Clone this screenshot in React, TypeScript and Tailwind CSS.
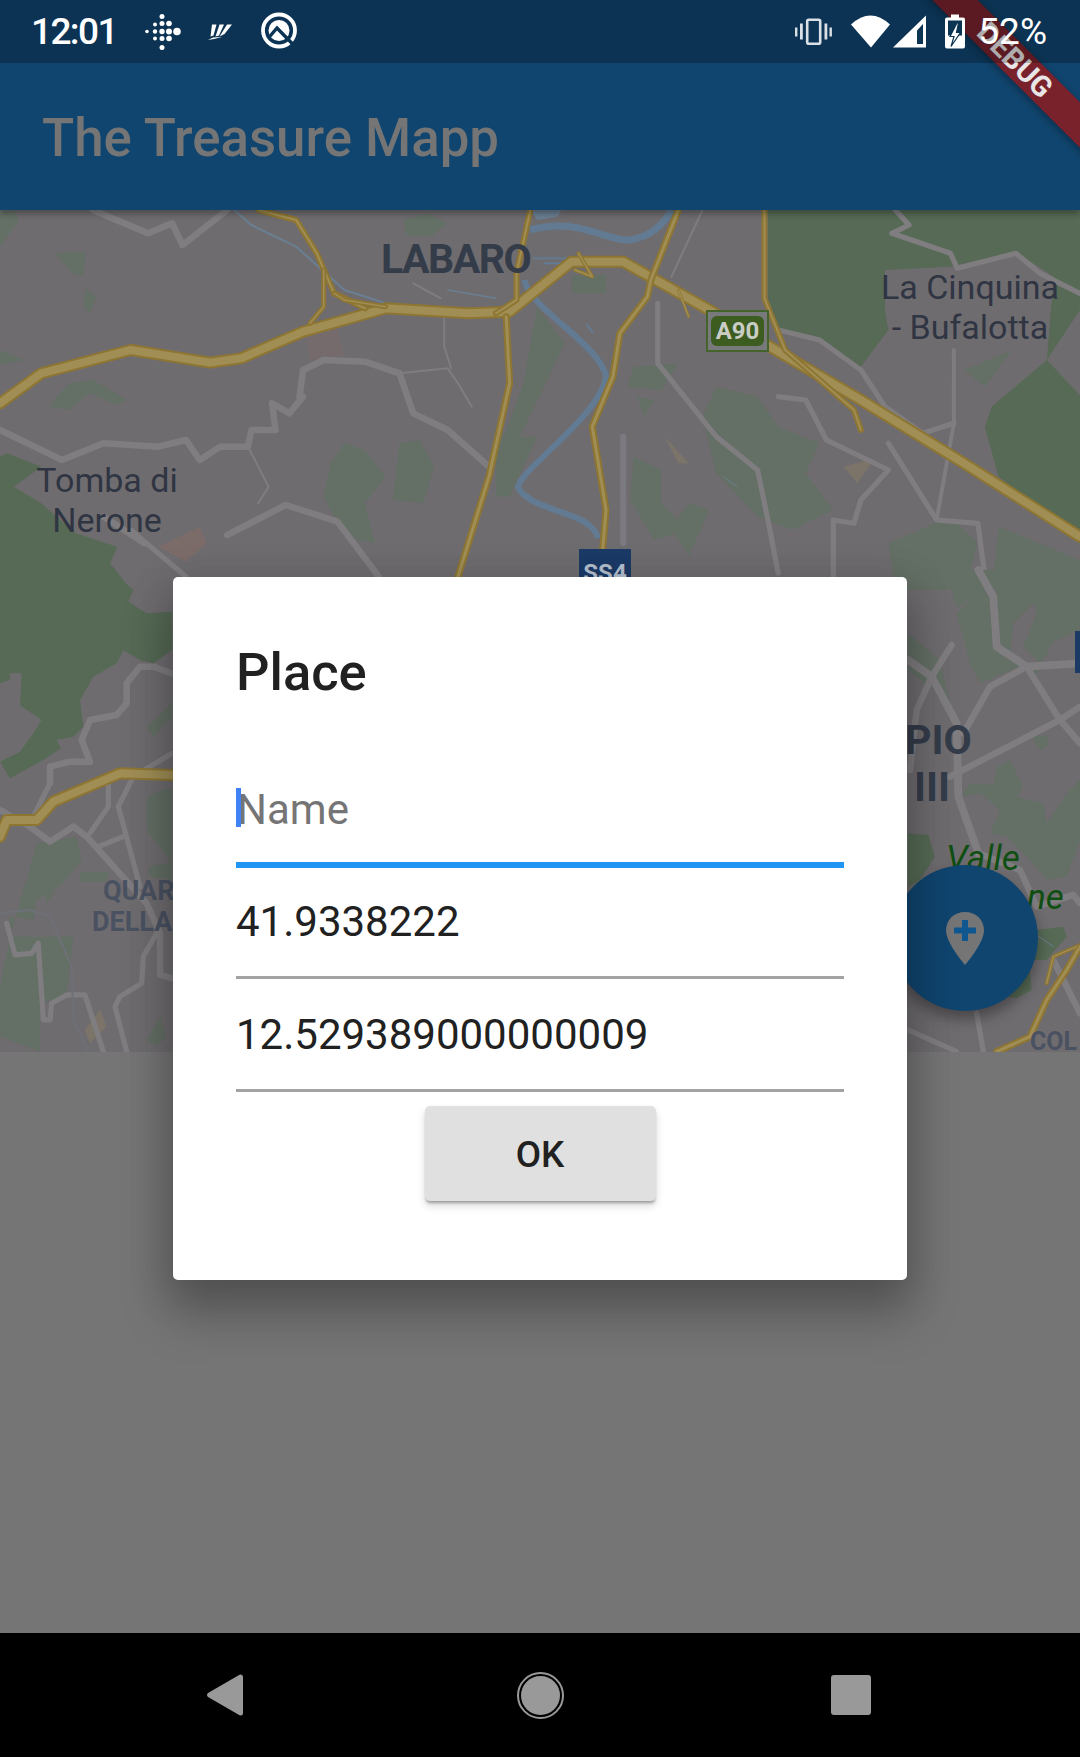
import React from "react";

const TOP = "translate(0 0) scale(0.6887 0.3333)";
const LEFT = "translate(0 360) scale(0.3333 0.3333)";
const RIGHT = "translate(880 360) scale(0.3333 0.3333)";

const DARK = "#566a55";
const LIGHT = "#646f65";
const ROAD = "#7f7d80";

function Gp({ d, f = DARK }: { d: string; f?: string }) {
  return <polygon points={d} fill={f} />;
}
function Rd({ d, w = 5, c = ROAD }: { d: string; w?: number; c?: string }) {
  const width = c === ROAD && w > 2 ? w * 1.3 : w;
  return <path d={d} fill="none" stroke={c} strokeWidth={width} vectorEffect="non-scaling-stroke" strokeLinejoin="round" strokeLinecap="round" />;
}
function Hw({ d, w = 9 }: { d: string; w?: number }) {
  return (
    <>
      <Rd d={d} w={w + 1} c="#8e7632" />
      <Rd d={d} w={Math.max(w - 3, 1.5)} c="#a08e55" />
    </>
  );
}

function MapDrawing() {
  return (
    <svg className="absolute inset-0 block" width="1080" height="842" viewBox="0 0 1080 842">
      <rect width="1080" height="842" fill="#6f6c70" />
      <g transform={TOP}>
        <Gp d="1115,0 1568,0 1568,300 1520,450 1570,560 1568,1000 1500,880 1450,800 1430,650 1440,590 1380,480 1385,300 1380,170 1285,180 1285,300 1290,360 1250,470 1190,390 1130,360 1115,300" />
        <Gp f="#6f6c70" d="1380,170 1475,125 1530,200 1520,450 1440,590 1385,560 1370,300" />
        <Gp d="0,740 10,730 60,770 20,830 60,880 110,970 170,1010 160,1060 190,1140 0,1140" />
        <Gp d="585,30 620,10 650,40 625,80 590,75" f={LIGHT} />
        <Gp d="80,130 125,125 120,200 105,190" f={LIGHT} />
        <Gp d="125,235 140,260 130,315 120,280" f={LIGHT} />
        <Gp d="0,420 35,450 0,465" f={LIGHT} />
        <Gp d="70,590 100,520 135,510 185,570 170,585 130,550 100,600" f={LIGHT} />
        <Gp d="780,290 820,400 790,530 750,700 730,690 760,520" f={LIGHT} />
        <Gp d="720,680 780,680 740,860 720,860" f={LIGHT} />
        <Gp d="830,195 880,195 880,250 830,250" f={LIGHT} />
        <Gp d="500,700 530,720 560,800 530,880 545,1000 500,980 470,860 480,760" f={LIGHT} />
        <Gp d="580,700 610,690 630,770 615,880 570,870" f={LIGHT} />
        <Gp d="920,740 960,780 960,880 1000,960 950,990 915,870" f={LIGHT} />
        <Gp d="1040,530 1100,560 1130,650 1190,700 1170,790 1210,900 1150,960 1100,920 1040,790 1020,620" f={LIGHT} />
        <Gp d="920,470 985,460 960,540 910,530" f={LIGHT} />
        <Gp d="925,560 950,570 935,620" f={LIGHT} />
        <Gp d="1400,480 1470,420 1430,530" f={LIGHT} />
        <Gp d="1290,1000 1380,920 1420,1000 1400,1140 1300,1140" f={LIGHT} />
        <Gp d="1000,880 1030,900 1000,1040 975,950" f={LIGHT} />
        <Gp d="1450,950 1568,1050 1568,1140 1440,1140" f={LIGHT} />
        <Gp d="445,380 490,350 500,440 450,450" f="#756b6d" />
        <Gp d="230,1010 290,950 300,1000 270,1055" f="#7c6c69" />
        <Gp d="1225,770 1270,745 1245,820" f="#7c7468" />
        <Gp d="965,680 1000,760 985,760" f="#7c7468" />
        <Gp d="0,0 20,0 28,30 0,110" f={LIGHT} />
        <Gp d="770,0 815,0 810,20 780,30" f="#6a7f92" />

        <Rd d="M135,0 L215,70 L250,40 L265,105 L330,0" />
        <Rd d="M1300,0 L1320,45 L1295,70 L1380,130 L1390,175 L1475,130 L1510,190 L1568,250" w={4} />
        <Rd d="M1130,360 L1190,390 L1250,480 L1285,590 L1340,670 L1385,640" w={4} />
        <Rd d="M955,280 L955,460 L1040,680 L1100,780 L1115,930 L1130,1090" w={4} />
        <Rd d="M435,560 L440,480 L470,450 L530,455 L580,490 L600,610 L650,660 L710,770" w={5} />
        <Rd d="M580,490 L650,475 L665,520 L685,590" w={2} />
        <Rd d="M645,320 L645,410 L655,475" w={2} />
        <Rd d="M600,220 L640,265" w={2} />
        <Rd d="M0,660 L90,750 L150,700 L230,710 L270,690 L290,750 L320,710 L360,710 L365,660 L400,660 L395,580 L420,610 L440,560" w={5} />
        <Rd d="M360,710 L390,830 L375,880" w={2} />
        <Rd d="M190,960 L270,1100" w={4} />
        <Rd d="M150,920 L210,1000 M330,975 L415,885 L490,935 L550,1100" w={5} />
        <Rd d="M1130,560 L1170,570 L1200,690 L1290,780 L1250,870 L1240,940 L1210,930 L1210,1100" w={4} />
        <Rd d="M1290,700 L1360,930 L1420,940 L1430,1100" w={4} />
        <Rd d="M1385,420 L1385,640 L1360,930" w={3} />
        <Rd d="M905,680 L905,1000" w={6} c="#7b7a80" />
        <Rd d="M1020,0 L975,200" w={2} />

        <Rd d="M340,0 L365,45 L430,110 L500,240 L560,280" w={2} c="#6a7f92" />
        <Rd d="M650,240 L720,265" w={1.5} c="#6a7f92" />
        <Rd d="M1050,800 L1070,830" w={1} c="#6a7f92" />
        <path d="M770,60 C840,20 880,95 915,90 C945,80 965,40 975,0" fill="none" stroke="#627b92" strokeWidth="7" vectorEffect="non-scaling-stroke" />
        <path d="M762,210 C765,290 870,400 880,500 C870,620 760,770 752,830 C770,910 860,900 868,985" fill="none" stroke="#627b92" strokeWidth="6" vectorEffect="non-scaling-stroke" />
        <Rd d="M775,145 L830,145 M790,160 L820,160" w={2} c="#627b92" />
        <Rd d="M852,345 L860,365" w={2} c="#627b92" />

        <Hw d="M0,580 L60,490 L190,420 L305,458 L350,445 L440,365 L560,295 L680,310 L740,305 L830,155 L905,155 L1030,300 L1130,425 L1250,570 L1400,760 L1568,980" w={11} />
        <Hw d="M375,0 L430,30 L460,130 L485,250 L530,295" w={5} />
        <Hw d="M470,180 L470,290 L450,340" w={4} />
        <Hw d="M485,250 L500,270 L560,290" w={4} />
        <Hw d="M770,0 L750,190 L750,270 L720,310" w={5} />
        <Hw d="M735,320 L740,520 L710,800 L665,1100" w={6} />
        <Hw d="M985,0 L945,210 L940,260 L900,370 L890,500 L860,650 L880,900 L875,1020" w={6} />
        <Hw d="M1110,0 L1110,265 L1140,420 L1240,600 L1250,660" w={5} />
        <Hw d="M840,130 L860,200 L835,180" w={3} />
        <Hw d="M985,240 L1000,320" w={2} />
      </g>

      <g transform={LEFT}>
        <Gp d="0,0 330,0 400,60 385,95 440,130 516,125 516,240 460,280 420,270 370,240 350,280 280,320 240,390 250,470 190,530 130,570 30,625 0,575 60,545 100,490 125,450 50,400 30,330 0,340" />
        <Gp d="30,310 65,310 60,420 30,390" f="#6f6c70" />
        <Gp d="170,510 220,500 230,560 200,570" f="#6f6c70" />
        <Gp d="440,470 516,400 516,440 460,500" f={LIGHT} />
        <Gp d="440,680 500,655 516,660 516,880 440,780" f={LIGHT} />
        <Gp d="110,820 230,800 245,870 190,940 110,990 100,1050 30,1040 30,1100 130,1100 220,1100 200,1280 120,1300 120,1445 0,1400 0,1250 30,1100" f={LIGHT} />
        <Gp d="240,905 330,905 320,935 240,935" f={LIGHT} />
        <Gp d="135,975 170,955 140,1000" f={LIGHT} />
        <Gp d="445,890 516,875 516,930 450,920" f={LIGHT} />
        <Gp d="440,1410 480,1340 500,1400 470,1430" f={LIGHT} />
        <Gp d="255,1380 300,1320 320,1370 270,1420" f="#7c7468" />
        <Rd d="M150,640 L150,590 L210,575 L270,575 L245,510 L270,450 L350,435 L380,400 L380,340 L420,290 L460,290 L516,310" w={5} />
        <Rd d="M0,720 L90,770 L150,815 L220,770 L260,800 L440,1000 L480,1090 L480,1215 L516,1225" w={5} />
        <Rd d="M150,640 L100,740 M325,640 L325,710 L270,790 M295,830 L370,800 M355,710 L420,950 M516,550 L400,620 L355,710" w={4} />
        <Rd d="M20,1060 L45,1155 L95,1150 L115,1120 L130,1350 L150,1350 L155,1300 L200,1275 L255,1275 L310,1445" w={4} />
        <Rd d="M470,1090 L430,1160 L425,1240 L360,1280 L345,1310 L380,1445" w={4} />
        <Rd d="M0,1030 L90,1020 L150,1040 L215,1190 L220,1350 L265,1445" w={2} c="#6e7078" />
        <Hw d="M0,800 L20,750 L110,750 L160,695 L360,610 L516,615" w={11} />
      </g>

      <g transform={RIGHT}>
        <Gp d="84,190 180,270 210,400 84,300" f={LIGHT} />
        <Gp d="230,115 310,60 350,130 400,150 470,100 460,0 200,0" f={LIGHT} />
        <Gp d="340,0 600,0 600,180 520,215 460,330 420,290 300,340 270,280 230,130 300,60" f={LIGHT} />
        <Gp d="400,160 460,100 470,130 430,230 480,280 420,290 390,260" f="#6f6c70" />
        <Gp d="510,260 545,210 580,270 540,275" f="#6f6c70" />
        <Gp d="455,500 500,495 505,525 480,540" f={LIGHT} />
        <Gp d="240,680 270,640 340,645 350,590 390,570 430,650 410,680 490,700 500,760 560,670 600,630 600,810 560,920 500,930 450,870 380,800 330,790 360,720 300,670" f={LIGHT} />
        <Gp d="84,790 145,795 165,860 120,930 84,950" f={DARK} />
        <Gp d="380,1280 450,1200 455,1260 410,1285" f={DARK} />
        <Gp d="470,1080 550,1070 560,1100 500,1170 460,1170" f={DARK} />
        <Rd d="M295,0 L340,80 L350,230 L440,290 L600,280" w={6} />
        <Rd d="M215,225 L155,320 L110,420 L90,600" w={5} />
        <Rd d="M84,270 L155,320 L230,460 L235,680 L295,850" w={6} />
        <Rd d="M440,290 L330,350 L250,490" w={5} />
        <Rd d="M440,290 L540,450 L600,520" w={5} />
        <Rd d="M210,620 L540,450 L600,410" w={5} />
        <Rd d="M295,850 L420,900 L470,1010 L580,975 L600,1000" w={5} />
        <Rd d="M84,1380 L230,1445 M290,1330 L310,1445" w={4} />
        <Rd d="M520,1170 L600,1330" w={5} />
        <Hw d="M350,1445 L450,1400 L500,1290 L560,1200 L600,1130" w={6} />
        <Hw d="M500,1240 L520,1160 L590,1130" w={3} />
        <Rd d="M470,1095 L520,1130" w={1} c="#6a7f92" />
      </g>
    </svg>
  );
}

function MapLabel({ text, className }: { text: React.ReactNode; className: string }) {
  return <div className={`absolute font-['Roboto',sans-serif] text-center ${className}`}>{text}</div>;
}

function StatusLeftIcons() {
  const dots: [number, number, number][] = [
    [147, 31, 1.8],
    [155, 24, 2], [155, 31, 2.2], [155, 38, 2],
    [162, 16, 2.5], [162, 23, 2.5], [162, 31, 2.7], [162, 38, 2.5], [162, 47, 2.5],
    [169, 23, 2.8], [169, 31, 3], [169, 38, 2.8],
    [177, 31, 3.8],
  ];
  return (
    <>
      <svg width="60" height="50" viewBox="140 6.500 60 50" className="block ml-[24px]">
        {dots.map(([x, y, r], i) => (
          <circle key={i} cx={x} cy={y} r={r} fill="#fff" />
        ))}
      </svg>
      <svg width="30" height="22" viewBox="206 20.500 30 22" className="block ml-[6px]">
        <path d="M212,24 L216.500,24 L213.500,35 L210.500,36 Z M219.500,24 L224,24 L219,35 L215.500,36 Z M227,24 L232,24 L224.500,33.500 L219.500,36 Z" fill="#fff" />
        <path d="M208,39.500 L213,37 L222,36.500 L214,38.500 Z" fill="#fff" />
      </svg>
      <svg width="40" height="40" viewBox="259 11.500 40 40" className="block ml-[23px]">
        <circle cx="279" cy="30" r="16" fill="none" stroke="#fff" strokeWidth="3.800" />
        <circle cx="279" cy="30" r="10.500" fill="#fff" />
        <path d="M268,38 L277,27.500 L297,48" fill="none" stroke="#0c3453" strokeWidth="3.400" />
      </svg>
    </>
  );
}

function StatusRightIcons() {
  return (
    <svg width="175" height="40" viewBox="793 11.500 175 40" className="block">
      <rect x="807.200" y="19.200" width="13" height="24" rx="1.500" fill="none" stroke="#fff" strokeOpacity="0.85" strokeWidth="2.600" />
      <rect x="800" y="23" width="2.800" height="16" fill="#fff" fillOpacity="0.85" />
      <rect x="795" y="27" width="2.400" height="9" fill="#fff" fillOpacity="0.85" />
      <rect x="824.500" y="23" width="2.800" height="16" fill="#fff" fillOpacity="0.85" />
      <rect x="829.500" y="27" width="2.400" height="9" fill="#fff" fillOpacity="0.85" />
      <path d="M851,24 Q870.500,6 890,24 L871,47 Z" fill="#fff" />
      <path d="M893,47 L926,15 L926,47 Z" fill="#fff" />
      <path d="M917,30 L923,23.500 L923,43.500 L917,43.500 Z" fill="#0c3453" />
      <path d="M945,19 Q945,17 947,17 L951,17 L951,14 L959,14 L959,17 L963,17 Q965,17 965,19 L965,46 Q965,48 963,48 L947,48 Q945,48 945,46 Z" fill="#fff" />
      <rect x="948" y="20" width="14" height="15" fill="#0c3453" />
      <path d="M957,22.500 L950,36 L954,36 L951,46 L960.500,32 L956.500,32 L958.500,22.500 Z" fill="#fff" stroke="#0c3453" strokeWidth="1.200" />
    </svg>
  );
}

function Field({ text, placeholder, focused, height }: { text: string; placeholder?: boolean; focused?: boolean; height: string }) {
  return (
    <div className={`flex flex-col justify-end ${height}`}>
      <div className={`relative h-[50px] text-[42px] leading-[50px] ${focused ? "mb-[27px]" : "mb-[29px]"} ${placeholder ? "text-[#757575] pl-[1px]" : "text-[#212121]"}`}>
        {focused && <span className="absolute left-0 top-[3px] w-[5px] h-[39px] bg-[#3f82f5]" />}
        {text}
      </div>
      <div className={focused ? "h-[6px] bg-[#2196f3]" : "h-[3px] bg-[#a3a3a3]"} />
    </div>
  );
}

export default function App() {
  return (
    <div className="relative w-[1080px] h-[1757px] overflow-hidden flex flex-col bg-black font-['Roboto',sans-serif]">
      <header className="relative h-[210px] shrink-0 bg-[#10456f] overflow-hidden shadow-[0_4px_6px_rgba(0,0,0,.3)] z-10">
        <div className="absolute top-[44px] left-[895px] w-[240px] h-[32px] bg-[#7a222c] rotate-45 flex items-center justify-center shadow-[0_2px_8px_rgba(0,0,0,.35)] z-10">
          <span className="text-[#e8e6e6] text-[29px] font-bold leading-none">DEBUG</span>
        </div>
        <div className="relative z-20 h-[63px] bg-black/25 flex items-center pl-[31px]">
          <span className="w-[85px] whitespace-nowrap text-white text-[37px] font-medium tracking-[-1.600px] leading-none">12:01</span>
          <StatusLeftIcons />
          <div className="ml-auto flex items-center">
            <StatusRightIcons />
            <span className="text-white text-[37px] leading-none ml-[10px] mr-[33px]">52%</span>
          </div>
        </div>
        <div className="h-[147px] flex items-center pl-[42px] pt-[4px] text-[52.800px] font-medium text-[#757575]">The Treasure Mapp</div>
      </header>

      <main className="relative h-[842px] shrink-0 overflow-hidden">
        <MapDrawing />
        <MapLabel text="LABARO" className="left-[381px] top-[26px] w-[148px] text-[41px] leading-[46px] font-bold text-[#343c4a] tracking-[-1.500px]" />
        <MapLabel text={<>La Cinquina<br />- Bufalotta</>} className="left-[870px] top-[57px] w-[200px] text-[34px] leading-[40px] text-[#2f3542]" />
        <MapLabel text={<>Tomba di<br />Nerone</>} className="left-[7px] top-[250px] w-[200px] text-[34px] leading-[40px] text-[#2f3542]" />
        <div className="absolute left-[706px] top-[100px] w-[63px] h-[42px] border-2 border-[#45642c] bg-[#77797a] flex items-center justify-center">
          <div className="w-[53px] h-[30px] rounded-[6px] bg-[#3d5c20] text-[#c9cdc5] text-[24px] font-bold leading-[30px] text-center">A90</div>
        </div>
        <div className="absolute left-[579px] top-[339px] w-[52px] h-[40px] bg-[#1b3a66] text-[#b4bfcf] text-[24px] font-bold leading-[48px] text-center">SS4</div>
        <MapLabel text="QUAR" className="left-[103px] top-[665px] text-[27px] leading-[32px] font-bold text-[#4a5262]" />
        <MapLabel text="DELLA" className="left-[92px] top-[696px] text-[27px] leading-[32px] font-bold text-[#4a5262]" />
        <div className="absolute left-[1075px] top-[421px] w-[5px] h-[42px] bg-[#1b3a66]" />
        <MapLabel text="PIO" className="left-[905px] top-[507px] text-[41px] leading-[47px] font-bold text-[#343c4a]" />
        <MapLabel text="III" className="left-[914px] top-[554px] text-[41px] leading-[47px] font-bold text-[#343c4a]" />
        <div className="absolute left-[946px] top-[629px] text-[35px] leading-[40px] italic text-[#0f4f12]">Valle</div>
        <div className="absolute left-[1027px] top-[668px] text-[35px] leading-[40px] italic text-[#0f4f12]">ne</div>
        <MapLabel text="COL" className="left-[1030px] top-[816px] text-[25px] leading-[32px] font-bold text-[#4a5262]" />
        <div className="absolute left-[892px] top-[655px] w-[146px] h-[146px] rounded-full bg-[#10456f] flex items-center justify-center shadow-[0_8px_14px_rgba(0,0,0,.35)]">
          <svg width="38" height="54" viewBox="0 0 38 54" className="block mt-[1px]">
            <path d="M19,0 C8,0 0,8 0,18.500 C0,31 19,53 19,53 C19,53 38,31 38,18.500 C38,8 30,0 19,0 Z" fill="#757575" />
            <path d="M16,8 H22 V15.500 H30 V21.500 H22 V29 H16 V21.500 H8 V15.500 H16 Z" fill="#10568f" />
          </svg>
        </div>
      </main>

      <section className="flex-1 bg-[#757575]" />

      <nav className="h-[124px] shrink-0 bg-black flex items-center pl-[207px]">
        <svg width="36" height="42" viewBox="0 0 36 42" className="block">
          <path d="M33,0.500 Q36,0 36,3 L36,39 Q36,42 33,41.500 L1,23 Q-1,21 1,19 Z" fill="#999" />
        </svg>
        <div className="ml-[274px] w-[47px] h-[47px] rounded-full border-2 border-[#999] p-[2px]">
          <div className="w-full h-full rounded-full bg-[#999]" />
        </div>
        <div className="ml-[267px] w-[40px] h-[40px] rounded-[3px] bg-[#999]" />
      </nav>

      <div className="absolute left-[173px] top-[577px] w-[734px] h-[703px] z-20 bg-white rounded-[5px] px-[63px] pt-[64px] shadow-[0_32px_50px_4px_rgba(0,0,0,.22),0_10px_40px_6px_rgba(0,0,0,.14)]">
        <div className="h-[62px] text-[52.500px] leading-[62px] font-medium text-[#212121]">Place</div>
        <Field text="Name" placeholder focused height="h-[165px]" />
        <Field text="41.9338222" height="h-[111px]" />
        <Field text="12.529389000000009" height="h-[113px]" />
        <div className="mt-[14px] flex justify-center">
          <div className="w-[231px] h-[95px] pt-[2px] rounded-[5px] bg-[#e0e0e0] flex items-center justify-center text-[36.750px] font-medium text-[#212121] shadow-[0_3px_3px_-1px_rgba(0,0,0,.3),0_5px_8px_rgba(0,0,0,.14)]">OK</div>
        </div>
      </div>
    </div>
  );
}
